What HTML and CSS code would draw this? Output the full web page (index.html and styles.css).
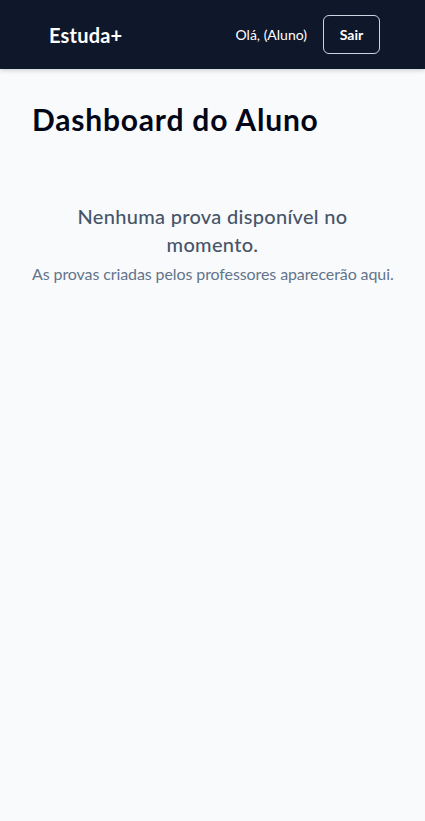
FILE: index.html
```html
<!DOCTYPE html>
<html lang="pt-BR">
<head>
<meta charset="utf-8">
<meta name="viewport" content="width=device-width, initial-scale=1">
<title>Estuda+</title>
<link rel="stylesheet" href="styles.css">
</head>
<body>
<header class="topbar">
  <div class="brand">Estuda+</div>
  <div class="user-area">
    <span class="greeting">Olá, (Aluno)</span>
    <button class="btn-logout">Sair</button>
  </div>
</header>
<main class="page">
  <h1 class="page-title">Dashboard do Aluno</h1>
  <section class="empty">
    <p class="empty-title">Nenhuma prova disponível no momento.</p>
    <p class="empty-sub">As provas criadas pelos professores aparecerão aqui.</p>
  </section>
</main>
</body>
</html>
```

FILE: styles.css
```css
* { box-sizing: border-box; }
html, body { margin: 0; padding: 0; }
body {
  font-family: Lato, "Noto Sans", sans-serif;
  background: #f8fafc;
  color: #0f172a;
  min-height: 821px;
}
.topbar {
  height: 69px;
  background: #0f172a;
  display: flex;
  align-items: center;
  justify-content: space-between;
  padding: 0 45px 0 49px;
  box-shadow: 0 2px 4px rgba(0,0,0,0.15);
}
.brand {
  color: #fff;
  font-weight: 700;
  font-size: 20px;
  letter-spacing: 0.2px;
}
.user-area {
  display: flex;
  align-items: center;
  gap: 16px;
}
.greeting {
  color: #fff;
  font-size: 14px;
}
.btn-logout {
  font-family: inherit;
  background: transparent;
  color: #fff;
  font-weight: 700;
  font-size: 14px;
  border: 1px solid #cbd5e1;
  border-radius: 6px;
  width: 57px;
  height: 39px;
  padding: 0;
}
.page {
  padding: 32px;
}
.page-title {
  margin: 0;
  font-size: 30px;
  line-height: 36px;
  font-weight: 700;
  letter-spacing: 0.8px;
  color: #020617;
}
.empty {
  text-align: center;
  padding-top: 65px;
}
.empty-title {
  margin: 0;
  font-size: 20px;
  line-height: 28px;
  font-weight: 500;
  letter-spacing: 0.3px;
  color: #475569;
}
.empty-sub {
  margin: 4px 0 0;
  font-size: 16px;
  line-height: 24px;
  letter-spacing: -0.1px;
  color: #64748b;
  white-space: nowrap;
}
```
